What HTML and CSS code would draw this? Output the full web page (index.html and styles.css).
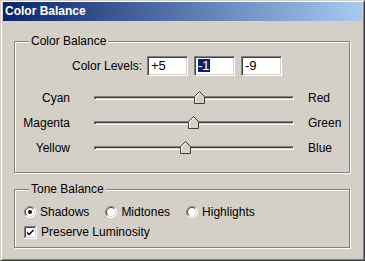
FILE: index.html
```html
<!DOCTYPE html>
<html lang="en">
<head>
  <meta charset="UTF-8">
  <meta name="viewport" content="width=device-width, initial-scale=1.0">
  <title>Color Balance</title>
  <link rel="stylesheet" href="styles.css">
</head>
<body>
  <div class="window">
    <div class="titlebar">Color Balance</div>
    <div class="content">
      <fieldset class="group group-color">
        <legend>Color Balance</legend>
        <div class="levels">
          <span class="levels-label">Color Levels:</span>
          <div class="field">+5</div>
          <div class="field"><span class="selected">-1</span></div>
          <div class="field">-9</div>
        </div>
        <div class="sliders">
          <span class="left">Cyan</span>
          <div class="track">
            <span class="thumb" style="left: 52.5%">
              <svg width="11" height="13" viewBox="0 0 11 13"><path d="M0.5 12.5V5.5L5.5 0.5L10.5 5.5V12.5Z" fill="#d4d0c8" stroke="#404040"/><path d="M1.5 11.5V6L5.5 2" fill="none" stroke="#fff"/></svg>
            </span>
          </div>
          <span class="right">Red</span>

          <span class="left">Magenta</span>
          <div class="track">
            <span class="thumb" style="left: 49.5%">
              <svg width="11" height="13" viewBox="0 0 11 13"><path d="M0.5 12.5V5.5L5.5 0.5L10.5 5.5V12.5Z" fill="#d4d0c8" stroke="#404040"/><path d="M1.5 11.5V6L5.5 2" fill="none" stroke="#fff"/></svg>
            </span>
          </div>
          <span class="right">Green</span>

          <span class="left">Yellow</span>
          <div class="track">
            <span class="thumb" style="left: 45.5%">
              <svg width="11" height="13" viewBox="0 0 11 13"><path d="M0.5 12.5V5.5L5.5 0.5L10.5 5.5V12.5Z" fill="#d4d0c8" stroke="#404040"/><path d="M1.5 11.5V6L5.5 2" fill="none" stroke="#fff"/></svg>
            </span>
          </div>
          <span class="right">Blue</span>
        </div>
      </fieldset>

      <fieldset class="group group-tone">
        <legend>Tone Balance</legend>
        <div class="radios">
          <label class="option">
            <svg class="radio" width="12" height="12" viewBox="0 0 12 12"><circle cx="6" cy="6" r="5.5" fill="#fff"/><path d="M2.1 9.9A5.5 5.5 0 0 1 9.9 2.1" fill="none" stroke="#808080"/><path d="M9.9 2.1A5.5 5.5 0 0 1 2.1 9.9" fill="none" stroke="#fff"/><path d="M2.8 9.2A4.5 4.5 0 0 1 9.2 2.8" fill="none" stroke="#404040"/><path d="M9.2 2.8A4.5 4.5 0 0 1 2.8 9.2" fill="none" stroke="#d4d0c8"/><circle cx="6" cy="6" r="2" fill="#000"/></svg>
            Shadows
          </label>
          <label class="option">
            <svg class="radio" width="12" height="12" viewBox="0 0 12 12"><circle cx="6" cy="6" r="5.5" fill="#fff"/><path d="M2.1 9.9A5.5 5.5 0 0 1 9.9 2.1" fill="none" stroke="#808080"/><path d="M9.9 2.1A5.5 5.5 0 0 1 2.1 9.9" fill="none" stroke="#fff"/><path d="M2.8 9.2A4.5 4.5 0 0 1 9.2 2.8" fill="none" stroke="#404040"/><path d="M9.2 2.8A4.5 4.5 0 0 1 2.8 9.2" fill="none" stroke="#d4d0c8"/></svg>
            Midtones
          </label>
          <label class="option">
            <svg class="radio" width="12" height="12" viewBox="0 0 12 12"><circle cx="6" cy="6" r="5.5" fill="#fff"/><path d="M2.1 9.9A5.5 5.5 0 0 1 9.9 2.1" fill="none" stroke="#808080"/><path d="M9.9 2.1A5.5 5.5 0 0 1 2.1 9.9" fill="none" stroke="#fff"/><path d="M2.8 9.2A4.5 4.5 0 0 1 9.2 2.8" fill="none" stroke="#404040"/><path d="M9.2 2.8A4.5 4.5 0 0 1 2.8 9.2" fill="none" stroke="#d4d0c8"/></svg>
            Highlights
          </label>
        </div>
        <label class="option check">
          <svg class="checkbox" width="13" height="13" viewBox="0 0 13 13"><rect x="0" y="0" width="13" height="13" fill="#fff"/><path d="M0.5 13V0.5H13" fill="none" stroke="#808080"/><path d="M1.5 12V1.5H12" fill="none" stroke="#404040"/><path d="M12.5 0V12.5H0" fill="none" stroke="#fff"/><path d="M11.5 1V11.5H1" fill="none" stroke="#d4d0c8"/><path d="M3 5.5L5 7.5L9.5 3V5L5 9.5L3 7.5Z" fill="#000"/></svg>
          Preserve Luminosity
        </label>
      </fieldset>
    </div>
  </div>
</body>
</html>
```

FILE: styles.css
```css
body {
  margin: 0;
  font-family: "Liberation Sans", Arial, sans-serif;
  font-size: 12px;
  color: #000;
  background: #d4d0c8;
}
.window {
  width: 365px;
  height: 261px;
  box-sizing: border-box;
  border: 1px solid;
  border-color: #d4d0c8 #404040 #404040 #d4d0c8;
  box-shadow: inset 1px 1px 0 #fff, inset -1px -1px 0 #808080;
  padding: 1px 2px 2px 2px;
  background: #d4d0c8;
}
.titlebar {
  height: 19px;
  line-height: 19px;
  padding-left: 2px;
  font-size: 12px;
  font-weight: bold;
  color: #fff;
  background: linear-gradient(to right, #0a246a, #a6caf0);
}
.content {
  padding: 13px 0 0 11px;
}
.group {
  width: 336px;
  box-sizing: border-box;
  margin: 0;
  padding: 0;
  min-inline-size: 0;
  border: 1px solid #808080;
  box-shadow: inset 1px 1px 0 #fff, 1px 1px 0 #fff;
}
.group legend {
  margin-left: 14px;
  padding: 0 2px;
  line-height: 14px;
  background: #d4d0c8;
}
.group-color {
  padding-bottom: 12px;
}
.group-tone {
  margin-top: 9px;
  padding-bottom: 6px;
}
.levels {
  display: flex;
  align-items: center;
  gap: 6px;
  margin-top: 8px;
}
.levels-label {
  width: 127px;
  text-align: right;
  margin-right: -1px;
}
.field {
  width: 41px;
  height: 20px;
  box-sizing: border-box;
  border: 1px solid;
  border-color: #808080 #fff #fff #808080;
  box-shadow: inset 1px 1px 0 #404040, inset -1px -1px 0 #d4d0c8;
  background: #fff;
  padding-left: 3px;
  line-height: 18px;
  font-size: 13px;
}
.selected {
  display: inline-block;
  line-height: 13px;
  background: #0a246a;
  color: #fff;
}
.sliders {
  display: grid;
  grid-template-columns: 55px 224px auto;
  grid-auto-rows: 25px;
  align-items: center;
  margin-top: 9px;
}
.sliders .left {
  text-align: right;
}
.sliders .right {
  margin-left: 14px;
}
.track {
  position: relative;
  height: 4px;
  margin-left: 24px;
  box-sizing: border-box;
  border: 1px solid;
  border-color: #808080 #fff #fff #808080;
  box-shadow: inset 1px 1px 0 #404040, inset -1px -1px 0 #d4d0c8;
  background: #fff;
}
.thumb {
  position: absolute;
  top: -6px;
  margin-left: -5px;
  width: 11px;
  height: 13px;
}
.thumb svg {
  display: block;
}
.radios {
  display: flex;
  margin-top: 7px;
  padding-left: 9px;
  gap: 16px;
}
.option {
  display: flex;
  align-items: center;
  gap: 4px;
  height: 18px;
}
.check {
  margin-top: 2px;
  padding-left: 9px;
}
```
